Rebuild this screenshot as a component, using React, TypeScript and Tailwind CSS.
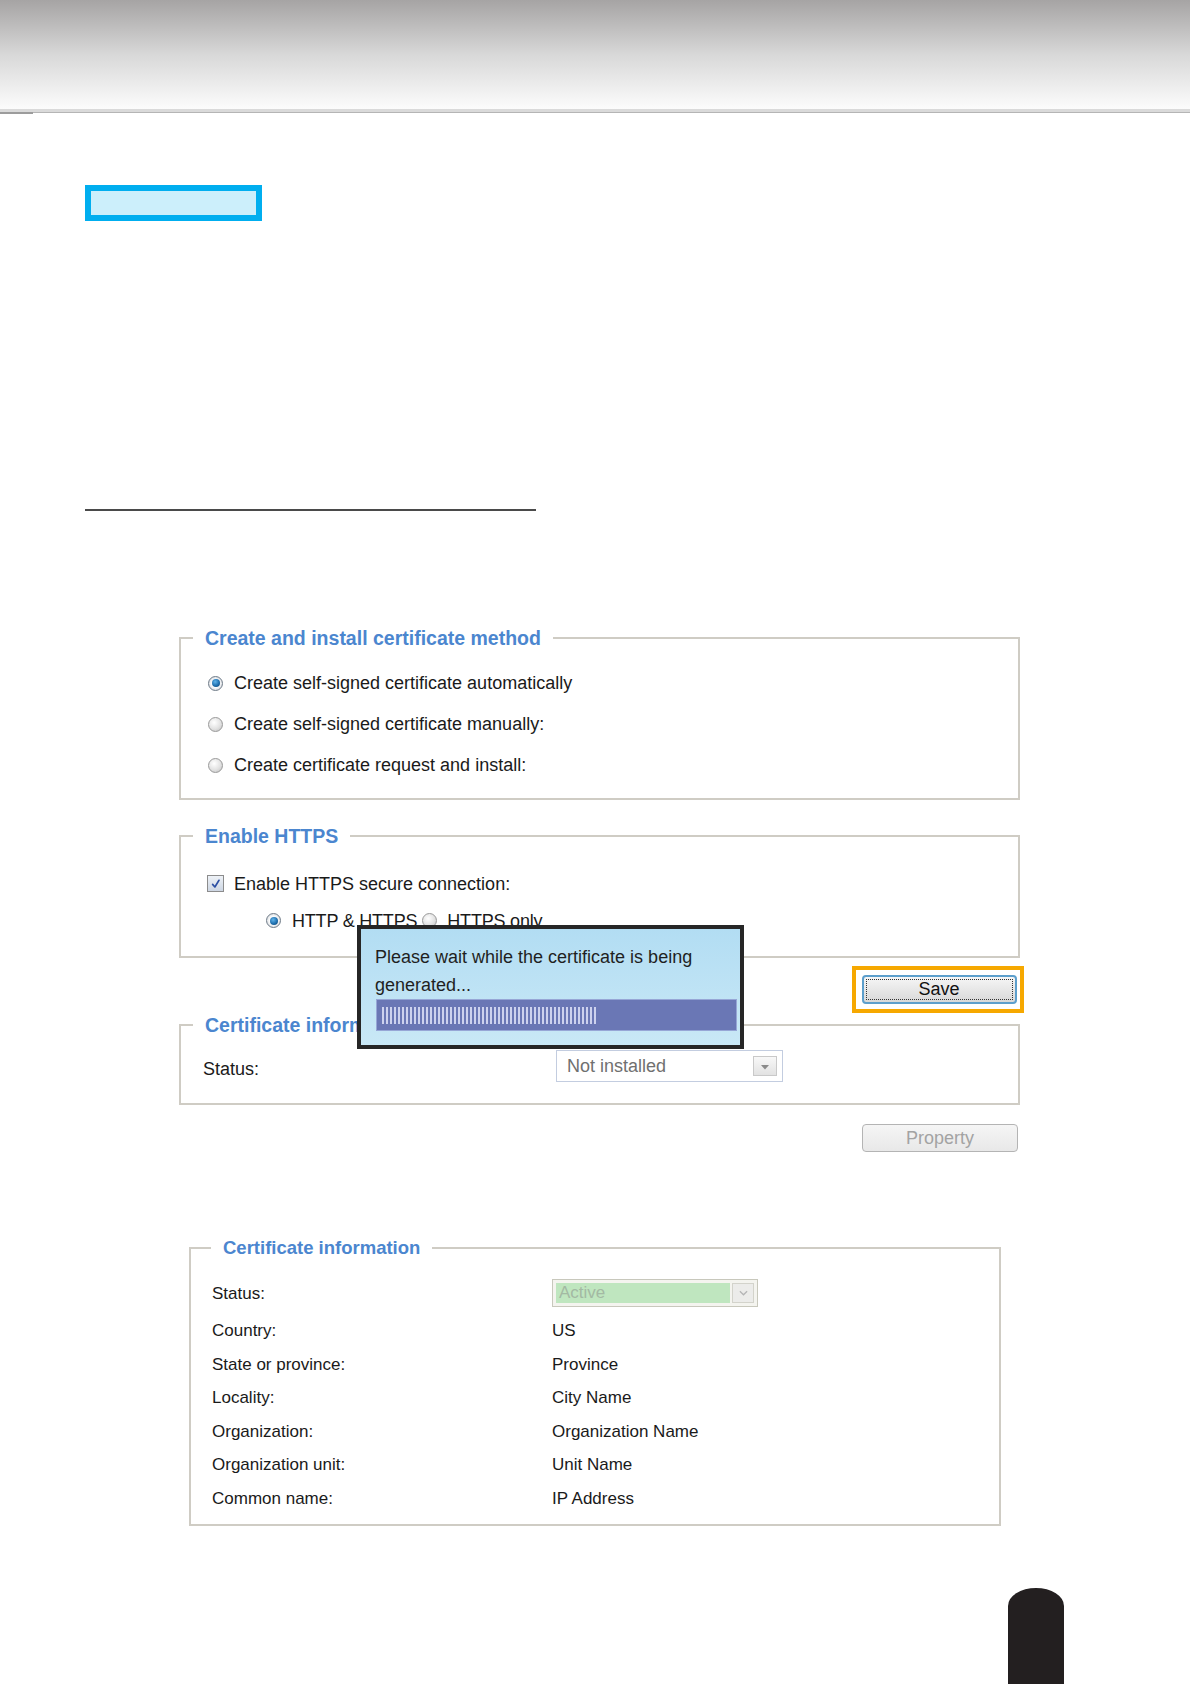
import React from 'react';

const font = "font-['Liberation_Sans',Arial,sans-serif]";

const Radio: React.FC<{ checked?: boolean }> = ({ checked }) => (
  <span
    className={`w-[15px] h-[15px] rounded-full border flex items-center justify-center shrink-0 ${
      checked
        ? 'border-[#6f7b88] bg-[radial-gradient(circle,#ffffff_40%,#c2c8cf_100%)]'
        : 'border-[#999999] bg-[radial-gradient(circle_at_40%_35%,#ffffff_0%,#e2e2e2_55%,#bdbdbd_100%)]'
    }`}
  >
    {checked && (
      <span className="w-[8px] h-[8px] rounded-full bg-[radial-gradient(circle_at_40%_35%,#5fb3ea_0%,#1f6fae_55%,#0d3f69_100%)]" />
    )}
  </span>
);

const Checkbox: React.FC = () => (
  <span className="w-[17px] h-[17px] border border-[#8c8c8c] bg-gradient-to-b from-[#eef2f7] to-[#cdd6e3] flex items-center justify-center shrink-0">
    <svg viewBox="0 0 16 16" className="w-[12px] h-[12px]" fill="none" stroke="#2c4fa3" strokeWidth="2.2">
      <path d="M3.5 8.5 L6.5 12 L12 3" strokeLinecap="round" strokeLinejoin="round" />
    </svg>
  </span>
);

const Legend: React.FC<{ children: React.ReactNode; small?: boolean }> = ({ children, small }) => (
  <legend
    className={`${small ? 'ml-[20px] text-[18.5px]' : 'ml-[12px] text-[19.5px]'} px-[12px] leading-[24px] font-bold text-[#4b86cf]`}
  >
    {children}
  </legend>
);

const methods = [
  { label: 'Create self-signed certificate automatically', checked: true },
  { label: 'Create self-signed certificate manually:', checked: false },
  { label: 'Create certificate request and install:', checked: false },
];

const certRows = [
  ['Country:', 'US'],
  ['State or province:', 'Province'],
  ['Locality:', 'City Name'],
  ['Organization:', 'Organization Name'],
  ['Organization unit:', 'Unit Name'],
  ['Common name:', 'IP Address'],
];

export default function App() {
  return (
    <div className={`relative w-[1190px] h-[1684px] bg-white overflow-hidden text-[#1a1a1a] ${font}`}>
      {/* Header band */}
      <div className="h-[109px] bg-gradient-to-b from-[#a6a4a4] via-[#d8d8d8] to-[#fcfcfc]" />
      <div className="h-[3px] bg-[#dadada]" />
      <div className="h-[1px] bg-[#b5b5b5] flex">
        <div className="w-[33px] h-[2px] bg-[#9c9c9c]" />
      </div>

      <div className="pl-[85px]">
        <div className="mt-[72px] w-[177px] h-[36px] border-[6px] border-[#00aeef] bg-[#cceffb]" />
        <div className="mt-[288px] w-[451px] h-[1.5px] bg-[#4a4a4a]" />
      </div>

      {/* Settings panels */}
      <div className="ml-[179px] w-[841px] text-[18px] leading-[22px]">
        <fieldset className="mt-[115px] border-2 border-[#cfccc4] pt-[13px] pb-[12px]">
          <Legend>Create and install certificate method</Legend>
          {methods.map((m) => (
            <div key={m.label} className="h-[41px] flex items-center gap-[11px] pl-[27px]">
              <Radio checked={m.checked} />
              <span>{m.label}</span>
            </div>
          ))}
        </fieldset>

        <fieldset className="mt-[24px] border-2 border-[#cfccc4] pt-[17px] pb-[17px]">
          <Legend>Enable HTTPS</Legend>
          <div className="h-[38px] flex items-center gap-[10px] pl-[26px]">
            <Checkbox />
            <span>Enable HTTPS secure connection:</span>
          </div>
          <div className="h-[36px] flex items-center pl-[85px]">
            <Radio checked />
            <span className="ml-[11px] tracking-[-0.2px]">HTTP &amp; HTTPS</span>
            <span className="ml-[5px]">
              <Radio />
            </span>
            <span className="ml-[10px] tracking-[-0.2px]">HTTPS only</span>
          </div>
        </fieldset>

        <div className="mt-[8px] flex justify-end mr-[-4px]">
          <div className="w-[172px] h-[47px] border-[4px] border-[#f6a800] flex items-center justify-center pl-[2px]">
            <button className="w-[155px] h-[29px] rounded-[4px] border-2 border-[#5d9fcc] bg-gradient-to-b from-[#f6f6f6] to-[#d9d9d9] p-[2px]">
              <span className="flex items-center justify-center w-full h-full border border-dotted border-[#333] text-[18px] leading-none text-[#111]">
                Save
              </span>
            </button>
          </div>
        </div>

        <fieldset className="mt-0 border-2 border-[#cfccc4] pt-[13px] pb-[21px]">
          <Legend>Certificate information</Legend>
          <div className="h-[32px] flex items-center pl-[22px]">
            <span className="w-[353px] mt-[6px]">Status:</span>
            <div className="w-[227px] h-[32px] border border-[#c3cde0] bg-white flex items-center justify-between pl-[10px] pr-[5px]">
              <span className="text-[#707070]">Not installed</span>
              <span className="w-[24px] h-[20px] border border-[#c9c9c9] bg-gradient-to-b from-[#f8f8f8] to-[#e2e2e2] flex items-center justify-center pt-[3px]">
                <svg viewBox="0 0 8 5" className="w-[8px] h-[5px]">
                  <path d="M0 0 H8 L4 4.5 Z" fill="#8a8a8a" />
                </svg>
              </span>
            </div>
          </div>
        </fieldset>

        <div className="mt-[19px] flex justify-end pr-[2px]">
          <button className="w-[156px] h-[28px] rounded-[4px] border border-[#b4b4b4] bg-gradient-to-b from-[#f5f5f5] to-[#e8e8e8] text-[18px] leading-none text-[#a3a3a3]">
            Property
          </button>
        </div>
      </div>

      {/* Certificate information (installed) */}
      <div className="ml-[189px] w-[812px] text-[17px] leading-[20px]">
        <fieldset className="mt-[84px] border-2 border-[#cfccc4] pt-[19px] pb-[8px]">
          <Legend small>Certificate information</Legend>
          <div className="h-[28px] flex items-center pl-[21px]">
            <span className="w-[340px] mt-[2px]">Status:</span>
            <div className="w-[206px] h-[28px] border border-[#c8c8bc] bg-[#f4f4ef] flex items-center p-[3px] gap-[2px]">
              <span className="flex-1 h-full bg-[#bfe6bf] flex items-center pl-[3px] text-[#a3b9a3]">Active</span>
              <span className="w-[22px] h-full border border-[#d3d3cb] bg-[#ececea] flex items-center justify-center">
                <svg viewBox="0 0 10 6" className="w-[9px] h-[6px]" fill="none" stroke="#b5b5b5" strokeWidth="1.4">
                  <path d="M1 1 L5 5 L9 1" />
                </svg>
              </span>
            </div>
          </div>
          <div className="mt-[8px]">
            {certRows.map(([k, v]) => (
              <div key={k} className="h-[33.5px] flex items-center pl-[21px]">
                <span className="w-[340px]">{k}</span>
                <span>{v}</span>
              </div>
            ))}
          </div>
        </fieldset>
      </div>

      {/* Page tab */}
      <div className="mt-[62px] flex justify-end pr-[126px]">
        <div className="w-[56px] h-[97px] bg-[#231f20] rounded-tl-[28px_18px] rounded-tr-[28px_18px]" />
      </div>

      {/* Generating overlay */}
      <div className="absolute left-[357px] top-[925px] w-[387px] h-[124px] border-[4px] border-[#262626] bg-gradient-to-b from-[#b2ddf3] to-[#c9e8f6] px-[14px] pt-[14px] text-[18px] leading-[28px] text-[#1f1f1f]">
        <p>Please wait while the certificate is being</p>
        <p>generated...</p>
        <div className="mt-[0px] ml-[1px] w-[361px] h-[32px] border border-[#97a6d6] bg-[#6a77b5] flex items-center pl-[5px] gap-[2px]">
          {Array.from({ length: 54 }).map((_, i) => (
            <span key={i} className="w-[2px] h-[17px] bg-[#cdd2ee]" />
          ))}
        </div>
      </div>
    </div>
  );
}
